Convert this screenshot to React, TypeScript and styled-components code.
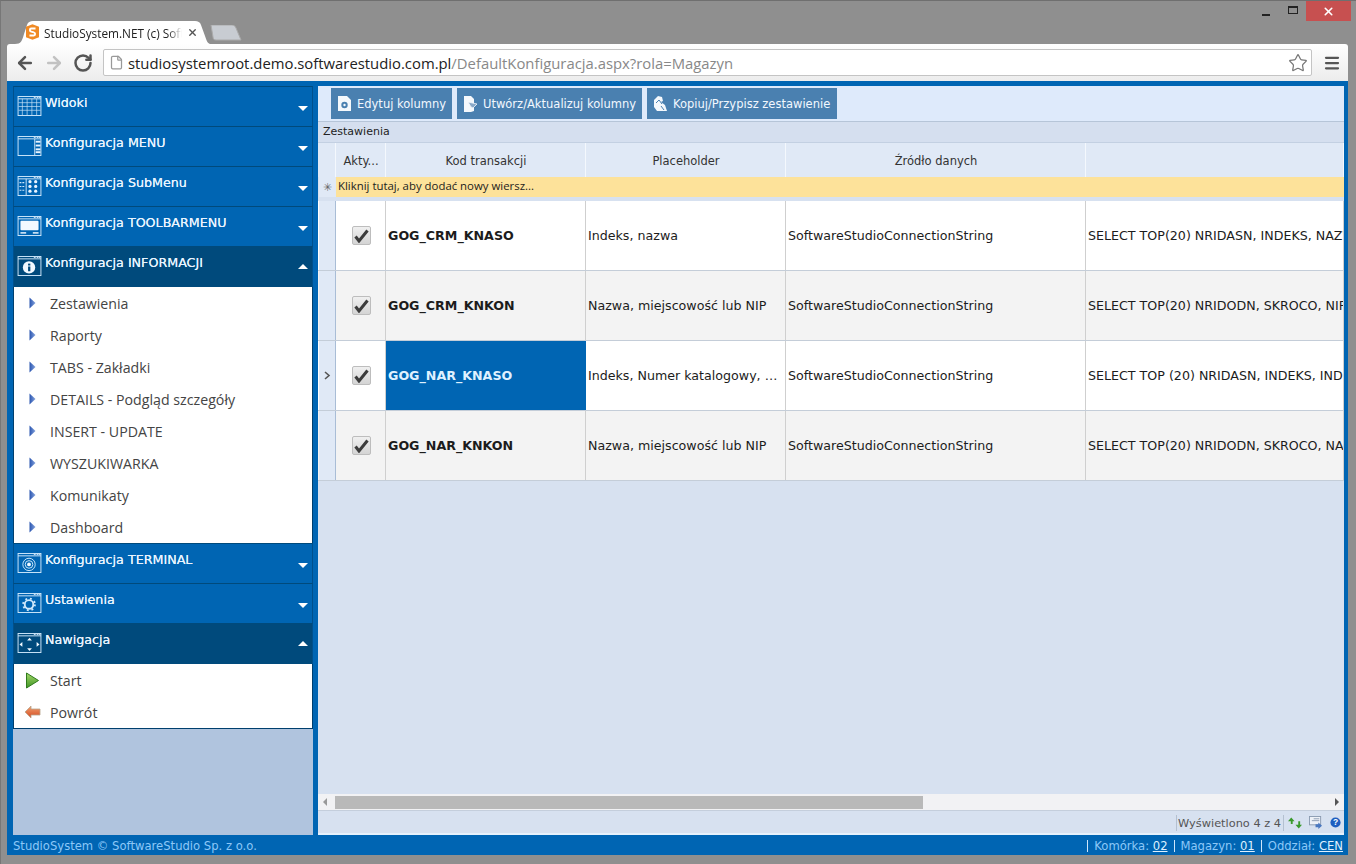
import React from "react";
import styled, { createGlobalStyle } from "styled-components";
import { ArrowLeft, ArrowRight, RotateCw, Star, Menu, X, File } from "lucide-react";

const Global = createGlobalStyle`
  html, body { margin: 0; padding: 0; width: 1356px; height: 864px; overflow: hidden; background: #8f8f8f; }
  * { box-sizing: border-box; }
`;

const UI = `"DejaVu Sans", Verdana, sans-serif`;
const BLUE = "#0065b3";

// ---- browser frame ----
const Frame = styled.div`
  width: 1356px;
  height: 864px;
  display: flex;
  flex-direction: column;
  padding: 0 8px 9px 6px;
  background: #8f8f8f;
  border-top: 1px solid #6f6f6f;
  border-left: 1px solid #777;
`;
const TabStrip = styled.div`
  height: 43px;
  display: flex;
  align-items: flex-end;
  padding-left: 8px;
  position: relative;
`;
const Tab = styled.div`
  width: 196px;
  height: 23px;
  position: relative;
  display: flex;
  align-items: center;
  padding: 0 0 0 29px;
  font: 11.8px "Open Sans", sans-serif;
  color: #222;
  white-space: nowrap;
  svg.shape { position: absolute; left: 0; top: 0; }
  span {
    position: relative;
    width: 138px;
    overflow: hidden;
    mask-image: linear-gradient(90deg, #000 90%, transparent);
  }
`;
const TabIcon = styled.svg`
  position: absolute;
  left: 11px;
  top: 3px;
`;
const TabClose = styled(X)`
  position: absolute;
  left: 172px;
  top: 6px;
  color: #555;
`;
const GhostTab = styled.svg`
  margin: 0 0 3px -1px;
`;
const Caption = styled.div`
  position: absolute;
  right: -3px;
  top: 0;
  height: 20px;
  display: flex;
  align-items: flex-start;
`;
const CapButton = styled.div`
  width: 27px;
  height: 20px;
  display: flex;
  align-items: center;
  justify-content: center;
`;
const Minimize = styled.i`
  display: block;
  width: 8px;
  height: 2px;
  background: #222;
  margin-top: 7px;
`;
const Maximize = styled.i`
  display: block;
  width: 10px;
  height: 8px;
  border: 1px solid #222;
  border-top-width: 2px;
  margin-top: -2px;
`;
const CloseButton = styled.div`
  width: 45px;
  height: 20px;
  background: #c75050;
  color: #fff;
  display: flex;
  align-items: center;
  justify-content: center;
`;
const Toolbar = styled.div`
  height: 37px;
  background: linear-gradient(#ffffff, #ececec);
  border-radius: 3px 3px 0 0;
  display: flex;
  align-items: center;
  padding: 0 0 0 8px;
`;
const NavIcons = styled.div`
  display: flex;
  gap: 9px;
  width: 88px;
  color: #555;
  align-items: center;
`;
const Omnibox = styled.div`
  width: 1209px;
  height: 27px;
  background: #fff;
  border: 1px solid #c4c4c4;
  border-radius: 2px;
  display: flex;
  align-items: center;
  padding: 0 3px 0 5px;
  font: 14.85px "Open Sans", sans-serif;
  color: #222;
  svg:first-child { margin-right: 4px; color: #999; }
  em { font-style: normal; color: #888; }
  svg:last-child { margin-left: auto; color: #777; }
`;
const Burger = styled(Menu)`
  margin-left: 11px;
  color: #555;
`;

// ---- application ----
const AppShell = styled.div`
  flex: 1;
  min-height: 0;
  background: ${BLUE};
  display: flex;
  flex-direction: column;
  padding: 5px 4px 0 6px;
`;
const Main = styled.div`
  flex: 1;
  min-height: 0;
  display: flex;
  gap: 5px;
`;
const Sidebar = styled.div`
  width: 300px;
  background: #b0c4de;
  display: flex;
  flex-direction: column;
`;
const Header = styled.div<{ $open?: boolean }>`
  height: ${(p) => (p.$open ? 41 : 40)}px;
  background: ${(p) => (p.$open ? "#004a7c" : BLUE)};
  border-top: 1px solid #004a7c;
  border-left: 1px solid #00508c;
  border-right: 1px solid #00508c;
  display: flex;
  padding: 6px 8px 0 3px;
  color: #e8f4ff;
  font: 12.7px/20px ${UI};
  position: relative;
  svg { margin-top: 3px; flex-shrink: 0; }
`;
const HeaderLabel = styled.span`
  margin-left: 3px;
  text-shadow: 0 0 0.6px #e8f4ff;
`;
const Caret = styled.i<{ $up?: boolean }>`
  position: absolute;
  right: 4px;
  top: ${(p) => (p.$up ? 17 : 19)}px;
  width: 0;
  height: 0;
  border-left: 5px solid transparent;
  border-right: 5px solid transparent;
  ${(p) => (p.$up ? "border-bottom: 5px solid #fff;" : "border-top: 5px solid #fff;")}
`;
const MenuList = styled.div`
  background: #fff;
  border-left: 1px solid #003f6e;
  border-right: 1px solid #003f6e;
`;
const LastMenuList = styled(MenuList)`
  border-bottom: 1px solid #003f6e;
`;
const MenuRow = styled.div`
  height: 32px;
  display: flex;
  align-items: center;
  font: 14.2px "Open Sans", sans-serif;
  color: #444;
  padding-left: 9px;
`;
const MenuIcon = styled.span`
  width: 27px;
  display: flex;
  justify-content: center;
  padding-right: 9px;
`;
const Content = styled.div`
  width: 1026px;
  background: #d7e1f0;
  display: flex;
  flex-direction: column;
  border-bottom: 2px solid #e6f1fc;
  overflow: hidden;
`;
const ButtonBar = styled.div`
  height: 36px;
  background: #deeafb;
  border-bottom: 1px solid #b6c5d8;
  display: flex;
  gap: 5px;
  padding: 2px 0 0 13px;
`;
const ActionButton = styled.div<{ $w: number }>`
  width: ${(p) => p.$w}px;
  height: 31px;
  background: #4a80b0;
  color: #f2f8ff;
  display: flex;
  align-items: center;
  padding-left: 6px;
  gap: 5px;
  font: 11.5px ${UI};
  white-space: nowrap;
`;
const Caption2 = styled.div`
  height: 21px;
  background: #d5dfef;
  border-bottom: 1px solid #c3d0e2;
  font: 11px/19px ${UI};
  color: #222;
  padding-left: 5px;
`;
const ColumnRow = styled.div`
  display: grid;
  grid-template-columns: 17px 50px 200px 200px 300px 258px;
  padding-left: 1px;
  width: 1026px;
`;
const HeadRow = styled(ColumnRow)`
  height: 34px;
  background: #e0e9f6;
`;
const HeadCell = styled.div`
  border-right: 1px solid #f4f8fd;
  display: flex;
  align-items: center;
  justify-content: center;
  padding: 1px 0 0 1px;
  font: 11.5px ${UI};
  color: #333;
`;
const InsertRow = styled.div`
  height: 20px;
  display: flex;
  background: #fde29a;
  margin-left: 1px;
  font: 11.4px/18px "Open Sans", sans-serif;
  color: #1c1c1c;
  margin-bottom: 4px;
`;
const InsertMark = styled.div`
  width: 17px;
  background: #e0e9f6;
  color: #666;
  font-size: 11px;
  line-height: 20px;
  text-align: center;
  flex-shrink: 0;
`;
const InsertText = styled.div`
  padding-left: 2px;
`;
const Row = styled(ColumnRow)<{ $alt?: boolean }>`
  height: 70px;
  background: ${(p) => (p.$alt ? "#f3f3f3" : "#fff")};
  border-bottom: 1px solid #c4cdd8;
  font: 12.65px ${UI};
  color: #1c1c1c;
`;
const Indicator = styled.div`
  background: #e0e9f6;
  border-right: 1px solid #a9bdd6;
  display: flex;
  align-items: center;
  justify-content: center;
  color: #555;
`;
const Cell = styled.div<{ $selected?: boolean; $bold?: boolean }>`
  border-right: 1px solid #cfcfcf;
  display: flex;
  align-items: center;
  padding-left: 2px;
  white-space: nowrap;
  overflow: hidden;
  font-weight: ${(p) => (p.$bold ? 700 : 400)};
  ${(p) => p.$selected && `background: ${BLUE}; color: #dff1ff; border-right-color: ${BLUE};`}
`;
const CheckCell = styled(Cell)`
  justify-content: center;
  padding: 0 0 0 1px;
`;
const Checkbox = styled.div`
  width: 19px;
  height: 19px;
  border: 1px solid #bdbdbd;
  border-radius: 2px;
  background: linear-gradient(#f0f0f0, #d4d4d4);
  display: flex;
  align-items: center;
  justify-content: center;
`;
const Clipped = styled.span`
  display: block;
  width: 196px;
  overflow: hidden;
  text-overflow: ellipsis;
`;
const Spacer = styled.div`
  flex: 1;
`;
const ScrollBar = styled.div`
  height: 17px;
  background: #f2f2f4;
  border-bottom: 1px solid #c4cedc;
  display: flex;
  align-items: center;
  justify-content: space-between;
  padding: 0 5px;
`;
const ArrowGlyph = styled.i<{ $right?: boolean }>`
  width: 0;
  height: 0;
  border-top: 4px solid transparent;
  border-bottom: 4px solid transparent;
  ${(p) => (p.$right ? "border-left: 4px solid #555;" : "border-right: 4px solid #999;")}
`;
const Thumb = styled.div`
  position: absolute;
  left: 17px;
  top: 2px;
  width: 588px;
  height: 13px;
  background: #b9b9b9;
`;
const ScrollWrap = styled.div`
  position: relative;
`;
const StatusBar = styled.div`
  height: 22px;
  background: #d7e1f0;
  display: flex;
  justify-content: flex-end;
  align-items: center;
  padding: 1px 3px 0 0;
  font: 11.35px ${UI};
  color: #555;
`;
const StatusText = styled.div`
  border-left: 1px solid #b4c0d0;
  border-right: 1px solid #b4c0d0;
  padding: 0 2px 0 1px;
  height: 16px;
  line-height: 16px;
`;
const StatusIcons = styled.div`
  display: flex;
  align-items: center;
  gap: 7px;
  margin-left: 4px;
`;
const Footer = styled.div`
  height: 20px;
  display: flex;
  justify-content: space-between;
  align-items: center;
  font: 11.6px ${UI};
  color: #8cc8f8;
  padding: 2px 1px 0 0;
`;
const FooterRight = styled.div`
  display: flex;
  gap: 6px;
  u { color: #dff1ff; }
`;
const FooterItem = styled.span`
  border-left: 1px solid #cfe6fa;
  padding-left: 6px;
  line-height: 12px;
`;

// ---- drawn icons ----
type WinKind = "grid" | "menu" | "sub" | "toolbar" | "info" | "target" | "gear" | "nav";

function WindowIcon({ kind }: { kind: WinKind }) {
  return (
    <svg width="25" height="20" viewBox="0 0 25 21" fill="none" stroke="#cfe8fb" strokeWidth="1">
      <rect x="0.5" y="0.5" width="24" height="20" />
      <line x1="0.5" y1="3" x2="24.5" y2="3" />
      <g fill="#cfe8fb" stroke="none">
        <rect x="17" y="1" width="2" height="1" />
        <rect x="20" y="1" width="2" height="1" />
        <rect x="22.5" y="1" width="1.5" height="1" />
      </g>
      {kind === "grid" && (
        <g strokeWidth="0.7">
          {[7, 11, 15].map((y) => <line key={y} x1="1" y1={y} x2="24" y2={y} />)}
          {[5, 10, 15, 20].map((x) => <line key={x} x1={x} y1="3" x2={x} y2="20" />)}
        </g>
      )}
      {kind === "menu" && (
        <g>
          <line x1="18" y1="3" x2="18" y2="20" />
          {[5, 9, 13, 16].map((y) => <rect key={y} x="19" y={y} width="5" height="2" fill="#e8f4ff" stroke="none" />)}
        </g>
      )}
      {kind === "sub" && (
        <g>
          <line x1="9" y1="3" x2="9" y2="20" />
          {[6, 10, 14].map((y) => <line key={y} x1="2" y1={y + 1} x2="7" y2={y + 1} strokeWidth="1.2" strokeDasharray="2 1" />)}
          {[6, 11, 16].map((y) => [13, 19].map((x) => <circle key={`${x}-${y}`} cx={x} cy={y} r="1.7" fill="#e8f4ff" stroke="none" />))}
        </g>
      )}
      {kind === "toolbar" && (
        <g>
          <rect x="3" y="5" width="19" height="10" rx="1" fill="#f2f9ff" stroke="none" />
          <rect x="3" y="17" width="6" height="1.5" fill="#f2f9ff" stroke="none" />
          <rect x="16" y="17" width="6" height="1.5" fill="#f2f9ff" stroke="none" />
        </g>
      )}
      {kind === "info" && (
        <g>
          <circle cx="12" cy="12" r="6.5" fill="#f2f9ff" stroke="none" />
          <rect x="11" y="11" width="2.4" height="5" fill="#004a7c" stroke="none" />
          <rect x="11" y="8" width="2.4" height="2" fill="#004a7c" stroke="none" />
        </g>
      )}
      {kind === "target" && (
        <g>
          <circle cx="12" cy="12" r="6.5" />
          <circle cx="12" cy="12" r="4" />
          <circle cx="12" cy="12" r="2" fill="#f2f9ff" stroke="none" />
        </g>
      )}
      {kind === "gear" && (
        <g>
          <circle cx="12" cy="12" r="4.5" strokeWidth="2" />
          <circle cx="12" cy="12" r="6.2" strokeWidth="2" strokeDasharray="2 2.9" />
        </g>
      )}
      {kind === "nav" && (
        <g fill="#f2f9ff" stroke="none">
          <path d="M12.5 5l2.5 3h-5z" />
          <path d="M12.5 19l2.5-3h-5z" />
          <path d="M2 12l3-2.5v5z" />
          <path d="M23 12l-3-2.5v5z" />
        </g>
      )}
    </svg>
  );
}

const SmallArrow = () => (
  <svg width="7" height="12" viewBox="0 0 7 12">
    <defs>
      <linearGradient id="arrowFill" x1="0" x2="1" y1="0" y2="0">
        <stop offset="0" stopColor="#2a55b0" />
        <stop offset="1" stopColor="#86a4dc" />
      </linearGradient>
    </defs>
    <path d="M0.5 0.5L6.5 6L0.5 11.5z" fill="url(#arrowFill)" />
  </svg>
);

const StartIcon = () => (
  <svg width="15" height="17" viewBox="0 0 15 17">
    <defs>
      <linearGradient id="startFill" x1="0" x2="0" y1="0" y2="1">
        <stop offset="0" stopColor="#a4d86a" />
        <stop offset="1" stopColor="#3f9424" />
      </linearGradient>
    </defs>
    <path d="M1.5 1L13.5 8.5L1.5 16z" fill="url(#startFill)" stroke="#2f7a1c" strokeWidth="1" strokeLinejoin="round" />
  </svg>
);

const BackIcon = () => (
  <svg width="17" height="14" viewBox="0 0 17 14">
    <defs>
      <linearGradient id="backFill" x1="0" x2="0" y1="0" y2="1">
        <stop offset="0" stopColor="#f0a070" />
        <stop offset="1" stopColor="#d44a20" />
      </linearGradient>
    </defs>
    <path d="M7 1L1 7l6 6V10h9V4H7z" fill="url(#backFill)" stroke="#b8a38a" strokeWidth="0.8" />
  </svg>
);

const DocGear = () => (
  <svg width="15" height="17" viewBox="0 0 15 17">
    <path d="M1 1h9l4 4v11H1z" fill="#f4f8fc" />
    <circle cx="7.5" cy="10" r="3.2" fill="#4a80b0" />
    <circle cx="7.5" cy="10" r="1.2" fill="#f4f8fc" />
  </svg>
);

const DocSwap = () => (
  <svg width="15" height="18" viewBox="0 0 15 18">
    <path d="M1 1h7l3 3v12l-3 1H1z" fill="#f4f8fc" />
    <path d="M5 7l9 2-4 4-2-1z" fill="#8aa9c8" stroke="#f4f8fc" strokeWidth="0.8" />
  </svg>
);

const DocCopy = () => (
  <svg width="15" height="18" viewBox="0 0 15 18">
    <path d="M1 5l4-4 4 1 1 4-2 1 4 3 2 6H4L1 12z" fill="#f4f8fc" />
    <path d="M3 8l3-3 3 4" fill="none" stroke="#4a80b0" strokeWidth="1" />
    <path d="M8 11l3 4" stroke="#4a80b0" strokeWidth="1" />
  </svg>
);

const CheckMark = () => (
  <svg width="15" height="14" viewBox="0 0 15 14">
    <path d="M1.5 7.5L5 12L13.5 1.5" fill="none" stroke="#3c3c3c" strokeWidth="3" />
  </svg>
);

const menuItems = ["Zestawienia", "Raporty", "TABS - Zakładki", "DETAILS - Podgląd szczegóły", "INSERT - UPDATE", "WYSZUKIWARKA", "Komunikaty", "Dashboard"];

const rows = [
  { code: "GOG_CRM_KNASO", ph: "Indeks, nazwa", sql: "SELECT TOP(20) NRIDASN, INDEKS, NAZWA, JM, CENA FROM" },
  { code: "GOG_CRM_KNKON", ph: "Nazwa, miejscowość lub NIP", sql: "SELECT TOP(20) NRIDODN, SKROCO, NIP, MIASTO, ULICA FROM", alt: true },
  { code: "GOG_NAR_KNASO", ph: "Indeks, Numer katalogowy, kod kreskowy", sql: "SELECT TOP (20) NRIDASN, INDEKS, INDEKS2, NAZWA, JM FROM", selected: true },
  { code: "GOG_NAR_KNKON", ph: "Nazwa, miejscowość lub NIP", sql: "SELECT TOP(20) NRIDODN, SKROCO, NAZWA, MIASTO, ULICA FROM", alt: true },
];

export default function App() {
  return (
    <Frame>
      <Global />
      <TabStrip>
        <Tab>
          <svg className="shape" width="196" height="23" viewBox="0 0 196 23">
            <path d="M0 23C6 23 7 20 9 13L12 4C13 1 15 0 18 0H180C183 0 185 1 186 4L190 15C192 21 193 23 196 23z" fill="#fff" />
          </svg>
          <TabIcon width="13" height="16" viewBox="0 0 15 18">
            <path d="M7.5 0L15 3V15L7.5 18L0 15V3z" fill="#f08a24" />
            <path d="M11 5H6C4 5 4 8 6 8.5L9 9.5C11 10 11 13 9 13H4" fill="none" stroke="#fff" strokeWidth="2.2" />
          </TabIcon>
          <span>StudioSystem.NET (c) Soft</span>
          <TabClose size={11} strokeWidth={3} />
        </Tab>
        <GhostTab width="32" height="16" viewBox="0 0 32 16">
          <path d="M1 0H22C24 0 25 1 26 3L31 15H6C4 15 3 14 3 12z" fill="#c8ccd2" stroke="#aaa" />
        </GhostTab>
        <Caption>
          <CapButton><Minimize /></CapButton>
          <CapButton><Maximize /></CapButton>
          <CloseButton><X size={13} strokeWidth={3} /></CloseButton>
        </Caption>
      </TabStrip>
      <Toolbar>
        <NavIcons>
          <ArrowLeft size={20} strokeWidth={3} />
          <ArrowRight size={20} strokeWidth={3} color="#c2c2c2" />
          <RotateCw size={20} strokeWidth={3} />
        </NavIcons>
        <Omnibox>
          <File size={15} />
          <span>studiosystemroot.demo.softwarestudio.com.pl<em>/DefaultKonfiguracja.aspx?rola=Magazyn</em></span>
          <Star size={20} strokeWidth={1.5} />
        </Omnibox>
        <Burger size={18} strokeWidth={3} />
      </Toolbar>
      <AppShell>
        <Main>
          <Sidebar>
            <Header><WindowIcon kind="grid" /><HeaderLabel>Widoki</HeaderLabel><Caret /></Header>
            <Header><WindowIcon kind="menu" /><HeaderLabel>Konfiguracja MENU</HeaderLabel><Caret /></Header>
            <Header><WindowIcon kind="sub" /><HeaderLabel>Konfiguracja SubMenu</HeaderLabel><Caret /></Header>
            <Header><WindowIcon kind="toolbar" /><HeaderLabel>Konfiguracja TOOLBARMENU</HeaderLabel><Caret /></Header>
            <Header $open><WindowIcon kind="info" /><HeaderLabel>Konfiguracja INFORMACJI</HeaderLabel><Caret $up /></Header>
            <MenuList>
              {menuItems.map((m) => (
                <MenuRow key={m}><MenuIcon><SmallArrow /></MenuIcon>{m}</MenuRow>
              ))}
            </MenuList>
            <Header><WindowIcon kind="target" /><HeaderLabel>Konfiguracja TERMINAL</HeaderLabel><Caret /></Header>
            <Header><WindowIcon kind="gear" /><HeaderLabel>Ustawienia</HeaderLabel><Caret /></Header>
            <Header $open><WindowIcon kind="nav" /><HeaderLabel>Nawigacja</HeaderLabel><Caret $up /></Header>
            <LastMenuList>
              <MenuRow><MenuIcon><StartIcon /></MenuIcon>Start</MenuRow>
              <MenuRow><MenuIcon><BackIcon /></MenuIcon>Powrót</MenuRow>
            </LastMenuList>
          </Sidebar>
          <Content>
            <ButtonBar>
              <ActionButton $w={121}><DocGear />Edytuj kolumny</ActionButton>
              <ActionButton $w={185}><DocSwap />Utwórz/Aktualizuj kolumny</ActionButton>
              <ActionButton $w={190}><DocCopy />Kopiuj/Przypisz zestawienie</ActionButton>
            </ButtonBar>
            <Caption2>Zestawienia</Caption2>
            <HeadRow>
              <HeadCell />
              <HeadCell>Akty...</HeadCell>
              <HeadCell>Kod transakcji</HeadCell>
              <HeadCell>Placeholder</HeadCell>
              <HeadCell>Źródło danych</HeadCell>
              <HeadCell />
            </HeadRow>
            <InsertRow>
              <InsertMark>✳</InsertMark>
              <InsertText>Kliknij tutaj, aby dodać nowy wiersz...</InsertText>
            </InsertRow>
            {rows.map((r) => (
              <Row key={r.code} $alt={r.alt}>
                <Indicator>{r.selected && <svg width="7" height="9" viewBox="0 0 7 9"><path d="M1 1l4 3.5L1 8" fill="none" stroke="#555" strokeWidth="1.6" /></svg>}</Indicator>
                <CheckCell><Checkbox><CheckMark /></Checkbox></CheckCell>
                <Cell $bold $selected={r.selected}>{r.code}</Cell>
                <Cell><Clipped>{r.ph}</Clipped></Cell>
                <Cell>SoftwareStudioConnectionString</Cell>
                <Cell>{r.sql}</Cell>
              </Row>
            ))}
            <Spacer />
            <ScrollWrap>
              <ScrollBar><ArrowGlyph /><ArrowGlyph $right /></ScrollBar>
              <Thumb />
            </ScrollWrap>
            <StatusBar>
              <StatusText>Wyświetlono 4 z 4</StatusText>
              <StatusIcons>
                <svg width="14" height="12" viewBox="0 0 15 12">
                  <path d="M0 4l3.5-4 3.5 4H5v3H3V4zM8 8l3.5 4L15 8h-2V4h-2v4z" fill="#3a9a2c" />
                </svg>
                <svg width="14" height="13" viewBox="0 0 15 14">
                  <rect x="0.5" y="0.5" width="12" height="9" fill="#eef2f8" stroke="#8a9ab0" />
                  <path d="M5 3h6M3 5h8" stroke="#8a9ab0" />
                  <path d="M7 9h3V7l4 3.5L10 14v-2H7z" fill="#4a78c0" />
                </svg>
                <svg width="11" height="11" viewBox="0 0 13 13">
                  <circle cx="6.5" cy="6.5" r="6" fill="#1f5fc0" />
                  <text x="6.5" y="10" textAnchor="middle" fontSize="10" fontWeight="700" fill="#fff" fontFamily="Liberation Sans, sans-serif">?</text>
                </svg>
              </StatusIcons>
            </StatusBar>
          </Content>
        </Main>
        <Footer>
          <span>StudioSystem © SoftwareStudio Sp. z o.o.</span>
          <FooterRight>
            <FooterItem>Komórka: <u>02</u></FooterItem>
            <FooterItem>Magazyn: <u>01</u></FooterItem>
            <FooterItem>Oddział: <u>CEN</u></FooterItem>
          </FooterRight>
        </Footer>
      </AppShell>
    </Frame>
  );
}
